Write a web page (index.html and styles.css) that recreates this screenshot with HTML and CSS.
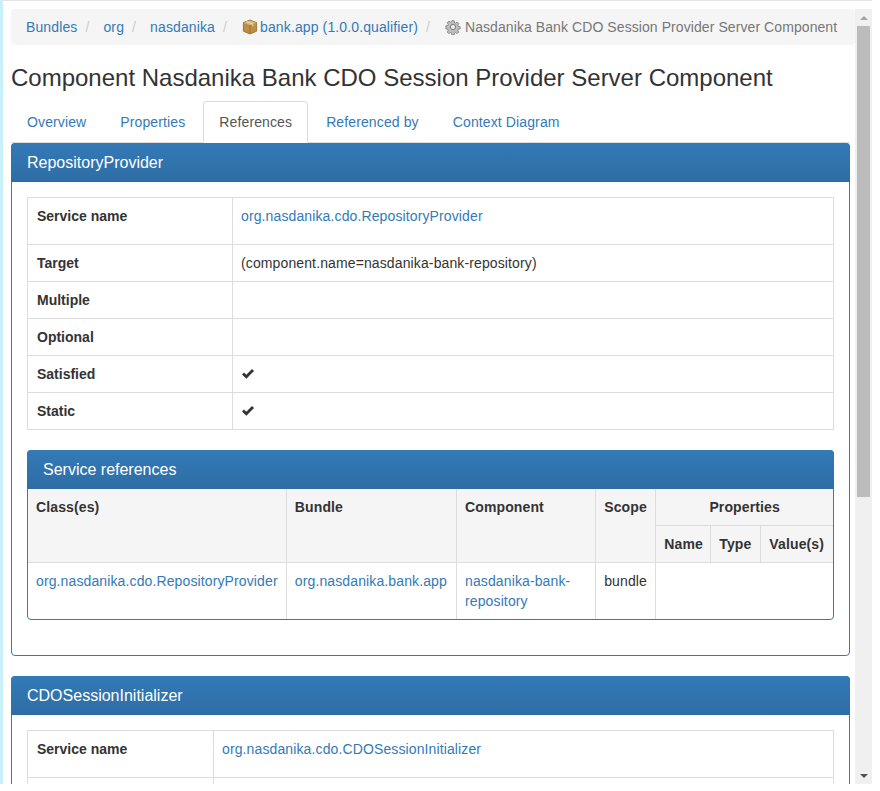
FILE: index.html

```html
<!DOCTYPE html>
<html lang="en">
<head>
  <meta charset="UTF-8" />
  <title>Component Nasdanika Bank CDO Session Provider Server Component</title>
  <link rel="stylesheet" href="styles.css">
</head>
<body>
  <div class="shell">
    <div class="viewport">
      <ol class="breadcrumb">
        <li><a href="#">Bundles</a></li>
        <li><a href="#">org</a></li>
        <li><a href="#">nasdanika</a></li>
        <li class="with-icon">
          <a href="#">
            <svg class="icon icon-package" viewBox="0 0 16 16">
              <path d="M8 1 14.6 3.6V12.2L8 15 1.4 12.2V3.6Z" fill="#bd8f45" stroke="#8f6a2c" stroke-width=".8"/>
              <path d="M1.8 3.8 8 6.2 14.2 3.8 8 1.4Z" fill="#dcb777"/>
              <path d="M8 6.2V14.8" stroke="#8f6a2c" stroke-width=".8"/>
              <path d="M4.4 2.6 10.8 5.1V7.4" stroke="#f0d9ae" stroke-width="1" fill="none"/>
            </svg>
            bank.app (1.0.0.qualifier)
          </a>
        </li>
        <li class="with-icon active">
          <svg class="icon" viewBox="0 0 16 16">
            <path d="M6.8 1h2.4l.4 2 1.3.6 1.8-1.1 1.7 1.7-1.1 1.8.6 1.3 2 .4v2.4l-2 .4-.6 1.3 1.1 1.8-1.7 1.7-1.8-1.1-1.3.6-.4 2H6.8l-.4-2-1.3-.6-1.8 1.1-1.7-1.7 1.1-1.8-.6-1.3-2-.4V6.7l2-.4.6-1.3-1.1-1.8 1.7-1.7 1.8 1.1 1.3-.6Z" transform="translate(.8 .8) scale(.9)" fill="#bdbdbd" stroke="#7a7a7a" stroke-width=".9"/>
            <circle cx="8" cy="8" r="2.6" fill="#eee" stroke="#7a7a7a" stroke-width="1"/>
          </svg>
          Nasdanika Bank CDO Session Provider Server Component
        </li>
      </ol>

      <h3 class="page-title">Component Nasdanika Bank CDO Session Provider Server Component</h3>

      <div class="main">
        <ul class="tabs">
          <li><a href="#">Overview</a></li>
          <li><a href="#">Properties</a></li>
          <li class="active"><a href="#">References</a></li>
          <li><a href="#">Referenced by</a></li>
          <li><a href="#">Context Diagram</a></li>
        </ul>

        <div class="panel">
          <div class="panel-heading">RepositoryProvider</div>
          <div class="panel-body">
            <table class="info info-wide">
              <tr class="tall"><th>Service name</th><td><a href="#">org.nasdanika.cdo.RepositoryProvider</a></td></tr>
              <tr><th>Target</th><td>(component.name=nasdanika-bank-repository)</td></tr>
              <tr><th>Multiple</th><td></td></tr>
              <tr><th>Optional</th><td></td></tr>
              <tr>
                <th>Satisfied</th>
                <td><svg class="check" viewBox="0 0 14 12"><path d="M1 6.4 3 4.4 5.3 6.7 11 1 13 3 5.3 10.7Z"/></svg></td>
              </tr>
              <tr>
                <th>Static</th>
                <td><svg class="check" viewBox="0 0 14 12"><path d="M1 6.4 3 4.4 5.3 6.7 11 1 13 3 5.3 10.7Z"/></svg></td>
              </tr>
            </table>

            <div class="panel sub-panel">
              <div class="panel-heading">Service references</div>
              <table class="refs">
                <colgroup>
                  <col class="col-class"><col class="col-bundle"><col class="col-component"><col class="col-scope">
                  <col class="col-name"><col class="col-type"><col class="col-value">
                </colgroup>
                <thead>
                  <tr>
                    <th rowspan="2">Class(es)</th>
                    <th rowspan="2">Bundle</th>
                    <th rowspan="2">Component</th>
                    <th rowspan="2">Scope</th>
                    <th colspan="3" class="center">Properties</th>
                  </tr>
                  <tr>
                    <th>Name</th>
                    <th>Type</th>
                    <th>Value(s)</th>
                  </tr>
                </thead>
                <tbody>
                  <tr>
                    <td><a href="#">org.nasdanika.cdo.RepositoryProvider</a></td>
                    <td><a href="#">org.nasdanika.bank.app</a></td>
                    <td><a href="#">nasdanika-bank-repository</a></td>
                    <td>bundle</td>
                    <td colspan="3"></td>
                  </tr>
                </tbody>
              </table>
            </div>
          </div>
        </div>

        <div class="panel">
          <div class="panel-heading">CDOSessionInitializer</div>
          <div class="panel-body">
            <table class="info info-narrow">
              <tr class="tall"><th>Service name</th><td><a href="#">org.nasdanika.cdo.CDOSessionInitializer</a></td></tr>
              <tr><th></th><td></td></tr>
            </table>
          </div>
        </div>
      </div>
    </div>

    <div class="scrollbar">
      <div class="arrow-box"><span class="arrow-up"></span></div>
      <div class="thumb"></div>
      <div class="track"></div>
      <div class="arrow-box"><span class="arrow-down"></span></div>
    </div>
  </div>
</body>
</html>
```

FILE: styles.css

```css
* {
  box-sizing: border-box;
}

body {
  margin: 0;
  background-color: #fff;
  color: #333;
  font-family: "Liberation Sans", Arial, sans-serif;
  font-size: 14px;
  line-height: 20px;
  letter-spacing: .12px;
}

a {
  color: #337ab7;
  text-decoration: none;
}

.shell {
  display: flex;
  width: 872px;
  height: 784px;
  padding-top: 8px;
  border-top: 1px solid #e4e4e4;
  border-left: 3px solid #c8f0f8;
}

.viewport {
  flex: 1;
  min-width: 0;
  padding-left: 8px;
  overflow: hidden;
}

/* breadcrumb */
.breadcrumb {
  display: flex;
  align-items: center;
  height: 36px;
  margin: 0;
  padding: 8px 15px;
  list-style: none;
  background-color: #f5f5f5;
  border-radius: 4px;
  white-space: nowrap;
}

.breadcrumb li + li::before {
  content: "/";
  padding: 0 5px;
  margin-left: 3px;
  margin-right: 9px;
  color: #ccc;
}

.breadcrumb li.with-icon::before {
  margin-right: 6px;
}

.breadcrumb .active {
  color: #777;
  letter-spacing: .08px;
}

.icon {
  width: 16px;
  height: 16px;
  vertical-align: -3px;
}

.icon-package {
  margin-right: -2px;
}

.page-title {
  margin: 20px 0 10px;
  font-size: 24px;
  font-weight: 500;
  line-height: 26px;
  letter-spacing: 0;
}

.main {
  margin-right: 5px;
}

/* tabs */
.tabs {
  display: flex;
  height: 42px;
  margin: 0;
  padding: 0;
  list-style: none;
  border-bottom: 1px solid #ddd;
}

.tabs li {
  height: 42px;
}

.tabs a {
  display: block;
  margin-right: 2px;
  padding: 10px 15px;
  border: 1px solid transparent;
  border-radius: 4px 4px 0 0;
}

.tabs .active a {
  color: #555;
  background-color: #fff;
  border-color: #ddd #ddd transparent;
}

/* panels */
.panel {
  margin-bottom: 20px;
  background-color: #fff;
  border: 1px solid #337ab7;
  border-radius: 4px;
}

.panel-heading {
  height: 39px;
  padding: 11px 16px 10px;
  margin: -1px -1px 0;
  color: #fff;
  font-size: 16px;
  line-height: 18px;
  letter-spacing: 0;
  background-image: linear-gradient(#337ab7, #2e6da4);
  border-radius: 4px 4px 0 0;
}

.panel-body {
  padding: 15px;
}

.sub-panel {
  margin-bottom: 20px;
}

/* key/value tables */
.info {
  width: 100%;
  margin-bottom: 20px;
  border-collapse: collapse;
}

.info th,
.info td {
  height: 37px;
  padding: 8px;
  border: 1px solid #ddd;
  text-align: left;
  vertical-align: top;
}

.info th {
  padding-left: 9px;
  letter-spacing: 0;
}

.info .tall th,
.info .tall td {
  height: 47px;
}

.info-wide th {
  width: 205px;
}

.info-narrow th {
  width: 186px;
}

.check {
  display: block;
  width: 14px;
  height: 12px;
  margin-top: 4px;
  fill: #333;
}

/* service references */
.refs {
  width: 100%;
  table-layout: fixed;
  border-collapse: collapse;
}

.refs th,
.refs td {
  padding: 8px;
  border: 1px solid #ddd;
  text-align: left;
  vertical-align: top;
}

.refs tr > :first-child {
  border-left: 0;
}

.refs tr > :last-child {
  border-right: 0;
}

.refs tbody td {
  border-bottom: 0;
}

.refs thead th {
  background-color: #f5f5f5;
}

.refs thead tr:first-child th {
  border-top: 0;
}

.refs .center {
  text-align: center;
}

.col-class { width: 258px; }
.col-bundle { width: 170px; }
.col-component { width: 139px; }
.col-scope { width: 60px; }
.col-name { width: 55px; }
.col-type { width: 50px; }
.col-value { width: 72px; }

/* window scrollbar */
.scrollbar {
  display: flex;
  flex-direction: column;
  flex: none;
  width: 17px;
  padding: 0 2px;
  background-color: #f0f0f0;
}

.arrow-box {
  display: flex;
  align-items: center;
  justify-content: center;
  flex: none;
  height: 17px;
}

.arrow-up {
  border: 4px solid transparent;
  border-top: 0;
  border-bottom-color: #a3a3a3;
}

.arrow-down {
  border: 4px solid transparent;
  border-bottom: 0;
  border-top-color: #505050;
}

.thumb {
  flex: none;
  height: 471px;
  background-color: #bcbcbc;
}

.track {
  flex: 1;
}
```
